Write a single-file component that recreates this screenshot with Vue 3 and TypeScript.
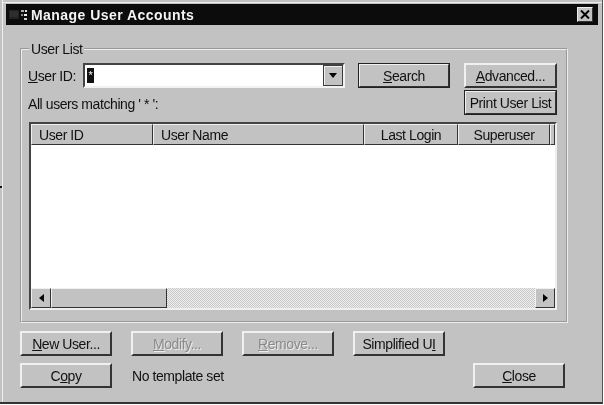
<script setup lang="ts">
const columns = [
  { label: 'User ID', width: 122, align: 'left' },
  { label: 'User Name', width: 211, align: 'left' },
  { label: 'Last Login', width: 94, align: 'center' },
  { label: 'Superuser', width: 92, align: 'center' },
]
</script>

<template>
  <div class="window">
    <span class="stray"></span>
    <div class="titlebar">
      <svg class="app-icon" width="20" height="14" viewBox="0 0 20 14">
        <rect x="1" y="2" width="10" height="9" fill="#222" />
        <path d="M2 4h8M2 6h8M2 8h8" stroke="#3a3a3a" stroke-width="1" />
        <rect x="13" y="2" width="3" height="2" fill="#aaa" />
        <rect x="17" y="2" width="2" height="2" fill="#ddd" />
        <rect x="13" y="6" width="2" height="2" fill="#888" />
        <rect x="16" y="6" width="3" height="2" fill="#eee" />
        <rect x="16" y="10" width="3" height="2" fill="#ccc" />
      </svg>
      <span class="title">Manage User Accounts</span>
      <button class="close-x" aria-label="Close">
        <svg width="10" height="9" viewBox="0 0 10 9"><path d="M1 0.5l8 8M9 0.5l-8 8" stroke="#000" stroke-width="2" /></svg>
      </button>
    </div>

    <div class="body">
      <fieldset class="group">
        <legend>User List</legend>
        <div class="search-row">
          <label class="id-label"><u>U</u>ser ID:</label>
          <div class="combo">
            <span class="combo-value"><span class="sel">*</span></span>
            <span class="combo-arrow"><i class="tri-down"></i></span>
          </div>
          <button class="btn default search"><u>S</u>earch</button>
          <button class="btn side"><u>A</u>dvanced...</button>
        </div>
        <div class="match-row">
          <span class="match-text">All users matching ' * ':</span>
          <button class="btn side print">Print User List</button>
        </div>
        <div class="list">
          <div class="list-head">
            <div v-for="c in columns" :key="c.label" class="col" :class="c.align" :style="{ width: c.width + 'px' }">{{ c.label }}</div>
            <div class="col filler"></div>
          </div>
          <div class="list-body"></div>
          <div class="hscroll">
            <span class="sbtn"><i class="tri-left"></i></span>
            <span class="thumb"></span>
            <span class="track"></span>
            <span class="sbtn"><i class="tri-right"></i></span>
          </div>
        </div>
      </fieldset>

      <div class="actions">
        <button class="btn"><u>N</u>ew User...</button>
        <button class="btn" disabled><u>M</u>odify...</button>
        <button class="btn" disabled><u>R</u>emove...</button>
        <button class="btn">Simplified U<u>I</u></button>
      </div>
      <div class="actions second">
        <button class="btn">C<u>o</u>py</button>
        <span class="template">No template set</span>
        <button class="btn close"><u>C</u>lose</button>
      </div>
    </div>
  </div>
</template>

<style>
html, body { margin: 0; background: #fff; }
</style>

<style scoped>
.window {
  position: relative;
  box-sizing: border-box;
  width: 603px;
  height: 404px;
  background: #c2c2c2;
  border-bottom: 2px solid #333;
  border-right: 1px solid #555;
  padding: 4px 4px 0 6px;
  display: flex;
  flex-direction: column;
  font-family: "Liberation Sans", Arial, sans-serif;
  font-size: 14px;
  letter-spacing: -0.42px;
  color: #111;
  box-shadow: inset 2px 0 #c2c2c2, inset 3px 0 #eee, inset 0 2px #c2c2c2, inset 0 3px #eee;
  filter: blur(0.4px);
}
.stray {
  position: absolute;
  left: 0;
  top: 186px;
  width: 2px;
  height: 2px;
  background: #111;
}
.titlebar {
  height: 21px;
  background: #0c0c0c;
  display: flex;
  align-items: center;
  flex: none;
}
.app-icon { flex: none; margin-left: 2px; }
.title { color: #f4f4f4; font-weight: 700; font-size: 14px; margin-left: 3px; letter-spacing: 0.45px; }
.close-x {
  margin-left: auto;
  margin-right: 5px;
  width: 16px;
  height: 15px;
  padding: 0;
  display: flex;
  align-items: center;
  justify-content: center;
  background: #c2c2c2;
  border: 1px solid;
  border-color: #f0f0f0 #333 #333 #f0f0f0;
}
.body { flex: 1; padding: 0 0 0 14px; display: flex; flex-direction: column; }
.group {
  box-sizing: border-box;
  width: 548px;
  height: 281px;
  margin: 17px 0 0;
  padding: 7px 9px 0 7px;
  border: 2px groove #ededed;
  min-width: 0;
  flex: none;
}
legend { padding: 0 2px; margin-left: 0; line-height: 14px; }
.search-row { display: flex; align-items: center; height: 25px; }
.id-label { width: 55px; margin-left: -1px; flex: none; padding-top: 1px; }
.combo {
  box-sizing: border-box;
  width: 262px;
  height: 25px;
  background: #fff;
  border: 2px solid;
  border-color: #444 #f2f2f2 #f2f2f2 #444;
  display: flex;
  align-items: stretch;
  flex: none;
}
.combo-value { flex: 1; padding: 2px 0 0 2px; line-height: 1; }
.sel { display: inline-block; width: 7px; height: 15px; background: #111; color: #fff; font-size: 11px; line-height: 14px; text-align: center; }
.combo-arrow {
  box-sizing: border-box;
  width: 20px;
  background: #c2c2c2;
  border: 1px solid #3c3c3c;
  box-shadow: inset 1px 1px #f0f0f0;
  display: flex;
  align-items: center;
  justify-content: center;
}
.tri-down { border: 4px solid transparent; border-top: 5px solid #000; border-bottom: 0; }
.tri-left { border: 4px solid transparent; border-right: 5px solid #000; border-left: 0; }
.tri-right { border: 4px solid transparent; border-left: 5px solid #000; border-right: 0; }
.btn {
  box-sizing: border-box;
  width: 92px;
  height: 25px;
  padding: 0;
  background: #c2c2c2;
  border: 2px solid;
  border-color: #f0f0f0 #333 #333 #f0f0f0;
  font: inherit;
  letter-spacing: inherit;
  color: inherit;
  flex: none;
}
.btn:disabled { color: #8a8a8a; text-shadow: 1px 1px #eee; }
.btn.default { outline: 1px solid #222; outline-offset: -1px; margin-left: 13px; }
.btn.side { margin-left: 14px; width: 93px; }
.match-row { display: flex; justify-content: space-between; height: 25px; margin-top: 2px; }
.match-text { margin-left: -1px; padding-top: 7px; line-height: 15px; }
.btn.print { outline: 1px solid #222; outline-offset: -1px; }
.list {
  box-sizing: border-box;
  width: 528px;
  height: 188px;
  margin-top: 7px;
  border: 2px solid;
  border-color: #444 #eee #eee #444;
  background: #fff;
  display: flex;
  flex-direction: column;
}
.list-head { display: flex; height: 21px; flex: none; background: #c2c2c2; }
.col {
  box-sizing: border-box;
  border: 1px solid;
  border-color: #f0f0f0 #333 #333 #f0f0f0;
  padding: 0 7px;
  line-height: 20px;
  flex: none;
}
.col.center { text-align: center; }
.col.filler { flex: 1; padding: 0; }
.list-body { flex: 1; }
.hscroll { display: flex; height: 20px; flex: none; }
.sbtn, .thumb {
  box-sizing: border-box;
  background: #c2c2c2;
  border: 1px solid;
  border-color: #f0f0f0 #333 #333 #f0f0f0;
  display: flex;
  align-items: center;
  justify-content: center;
  flex: none;
}
.sbtn { width: 20px; }
.thumb { width: 116px; }
.track {
  flex: 1;
  background-color: #f0f0f0;
  background-image: repeating-conic-gradient(#c8c8c8 0 25%, #eee 0 50%);
  background-size: 2px 2px;
}
.actions { display: flex; margin-top: 8px; gap: 19px; }
.actions.second { margin-top: 7px; align-items: center; gap: 0; }
.template { margin-left: 20px; }
.btn.close { margin-left: auto; margin-right: 33px; }
</style>
